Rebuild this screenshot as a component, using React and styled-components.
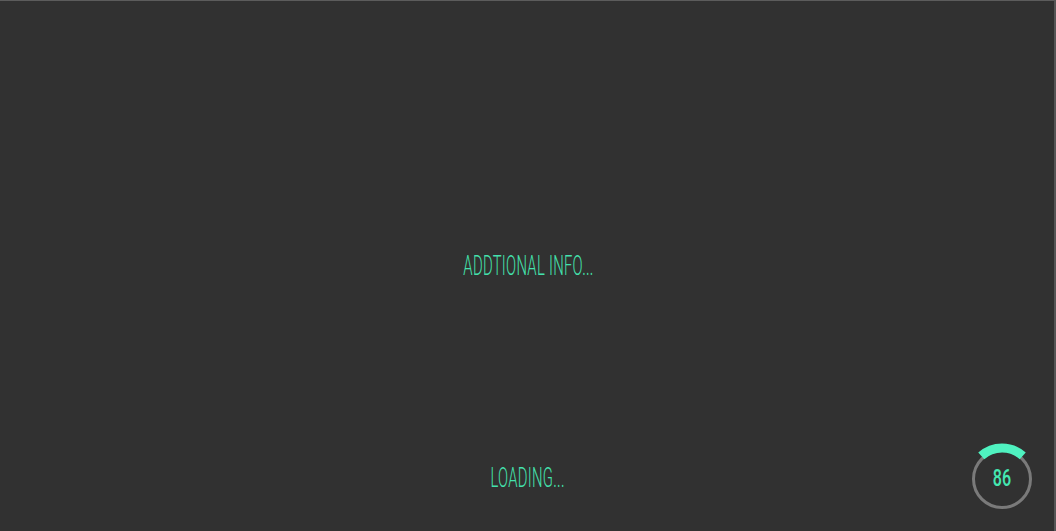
import React from 'react'
import styled, { createGlobalStyle } from 'styled-components'

const GlobalStyle = createGlobalStyle`
  html, body, #root {
    margin: 0;
    height: 100%;
  }
  body {
    background: #313131;
    font-family: Roboto, "Open Sans", sans-serif;
    overflow: hidden;
  }
`

const Screen = styled.div`
  box-sizing: border-box;
  height: 100vh;
  border-top: 1px solid #5c5c5c;
  border-right: 2px solid #555555;
  display: grid;
  grid-template-rows: 1fr auto 1fr;
  justify-items: center;
`

const Footer = styled.div`
  grid-row: 3;
  align-self: end;
  justify-self: stretch;
  display: grid;
  grid-template-columns: 1fr auto 1fr;
  align-items: center;
  padding: 0 16px 22px 0;
`

const Label = styled.span`
  display: inline-block;
  position: relative;
  top: ${p => p.shift}px;
  color: #44e2ad;
  font-weight: 300;
  font-size: 27px;
  letter-spacing: 0.5px;
  transform: scaleX(0.55);
  white-space: nowrap;
`

const InfoLabel = styled(Label)`
  grid-row: 2;
  left: 2px;
`

const LoadingLabel = styled(Label)`
  grid-column: 2;
  left: 9px;
`

const Gauge = styled.div`
  grid-column: 3;
  justify-self: end;
  position: relative;
  width: 72px;
  height: 72px;
`

const Value = styled.span`
  position: absolute;
  inset: 0;
  display: flex;
  align-items: center;
  justify-content: center;
  padding-top: 11px;
  color: #44e8b2;
  font-size: 23px;
  font-weight: 500;
  transform: scaleX(0.7);
`

function arcPath(cx, cy, r, from, to) {
  const rad = a => ((a - 90) * Math.PI) / 180
  const x1 = cx + r * Math.cos(rad(from))
  const y1 = cy + r * Math.sin(rad(from))
  const x2 = cx + r * Math.cos(rad(to))
  const y2 = cy + r * Math.sin(rad(to))
  return `M ${x1} ${y1} A ${r} ${r} 0 0 1 ${x2} ${y2}`
}

function Progress({ value }) {
  return (
    <Gauge>
      <svg width="72" height="72" viewBox="0 0 72 72">
        <circle cx="36" cy="42" r="28.5" fill="none" stroke="#7a7a7a" strokeWidth="3" />
        <path d={arcPath(36, 42, 31, -42, 42)} fill="none" stroke="#4ff2c0" strokeWidth="9" />
      </svg>
      <Value>{value}</Value>
    </Gauge>
  )
}

export default function App() {
  return (
    <>
      <GlobalStyle />
      <Screen>
        <InfoLabel shift={0}>ADDTIONAL INFO...</InfoLabel>
        <Footer>
          <LoadingLabel shift={5}>LOADING...</LoadingLabel>
          <Progress value={86} />
        </Footer>
      </Screen>
    </>
  )
}
